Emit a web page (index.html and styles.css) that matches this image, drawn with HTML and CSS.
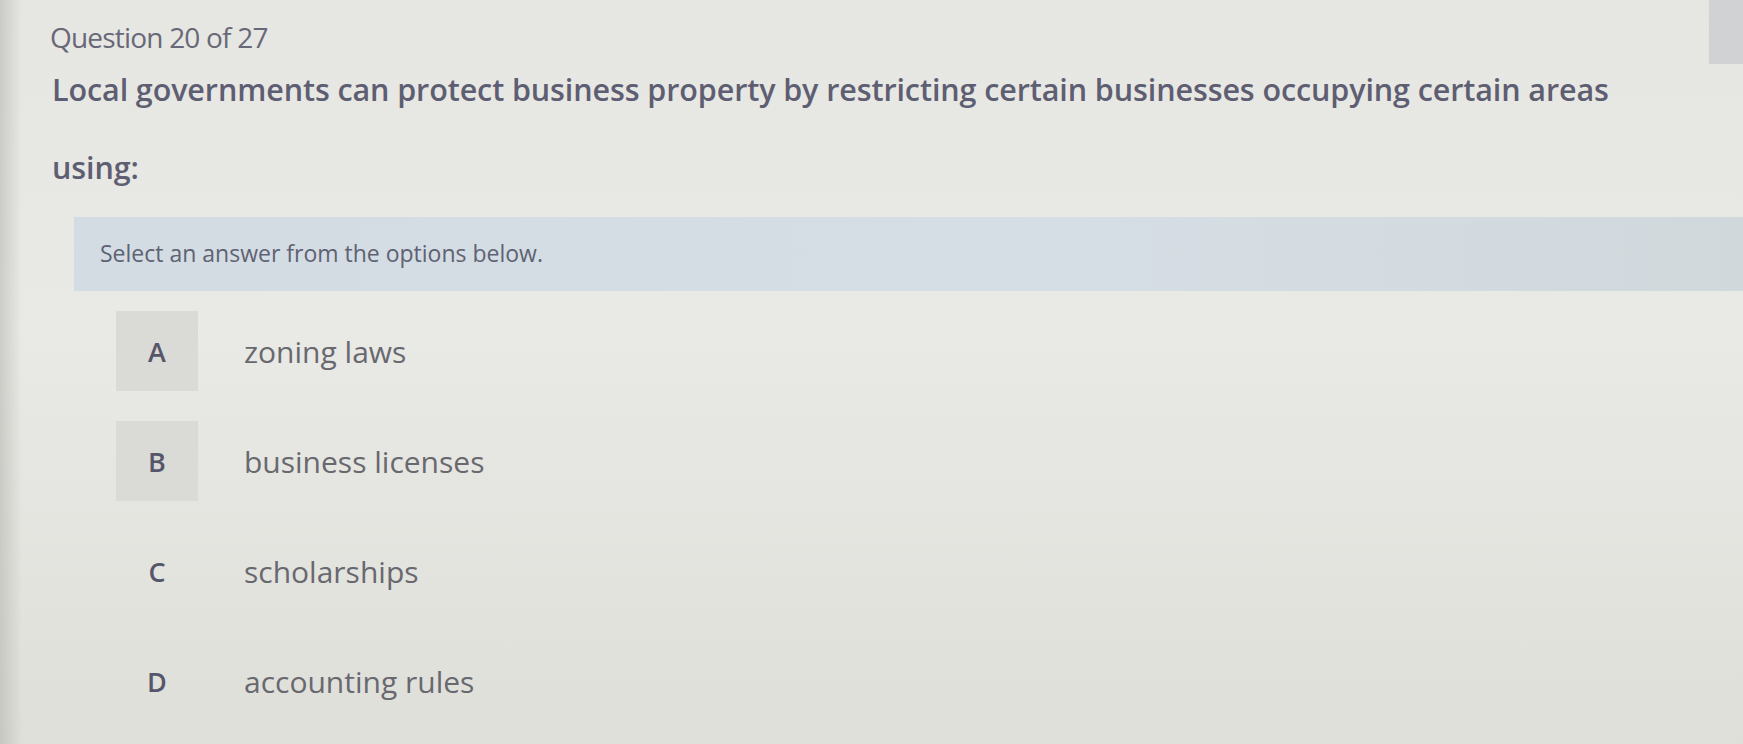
FILE: index.html
```html
<!DOCTYPE html>
<html lang="en">

<head>
    <meta charset="UTF-8">
    <meta name="viewport" content="width=device-width, initial-scale=1.0">
    <title>Question 20 of 27</title>
    <link rel="stylesheet" href="styles.css">
</head>

<body>
    <div class="quiz">
        <div class="quiz-head">
            <p class="quiz-count">Question 20 of 27</p>
            <h1 class="quiz-question">Local governments can protect business property by restricting certain businesses occupying certain areas using:</h1>
        </div>

        <div class="quiz-hint">Select an answer from the options below.</div>

        <ul class="options">
            <li class="option option-active">
                <span class="option-key">A</span>
                <span class="option-text">zoning laws</span>
            </li>
            <li class="option option-active">
                <span class="option-key">B</span>
                <span class="option-text">business licenses</span>
            </li>
            <li class="option">
                <span class="option-key">C</span>
                <span class="option-text">scholarships</span>
            </li>
            <li class="option">
                <span class="option-key">D</span>
                <span class="option-text">accounting rules</span>
            </li>
        </ul>
    </div>

    <!-- 우측 상단 스크롤 탭 -->
    <div class="scroll-tab"></div>
</body>

</html>
```

FILE: styles.css
```css
* {
    margin: 0;
    padding: 0;
    box-sizing: border-box;
}

body {
    position: relative;
    font-family: 'Open Sans', sans-serif;
    background:
        linear-gradient(90deg, rgba(170, 170, 165, 0.45) 0px, rgba(170, 170, 165, 0) 22px),
        linear-gradient(180deg, #e6e6e2 0%, #e9e9e5 45%, #dfdfda 100%);
    color: #5c5c6e;
    height: 744px;
    overflow: hidden;
}

.quiz {
    padding: 20px 0 0 50px;
}

.quiz-head {
    width: 1640px;
}

.quiz-count {
    font-size: 28px;
    letter-spacing: -0.8px;
    color: #686878;
    line-height: 34px;
}

.quiz-question {
    font-size: 30.5px;
    font-weight: 600;
    line-height: 78px;
    letter-spacing: -0.1px;
    color: #5e5e72;
    margin-top: -4px;
    padding-left: 2px;
}

.quiz-hint {
    margin-top: 11px;
    margin-left: 24px;
    padding: 21px 0 22px 26px;
    background: linear-gradient(90deg, #d3dbe3 0%, #d6dee5 60%, #d1d8dc 100%);
    font-size: 23px;
    line-height: 31px;
    color: #5e6272;
}

.options {
    list-style: none;
    display: flex;
    flex-direction: column;
    gap: 30px;
    margin: 20px 0 0 66px;
}

.option {
    display: flex;
    align-items: center;
    gap: 46px;
    height: 80px;
}

.option-key {
    width: 82px;
    height: 100%;
    display: flex;
    align-items: center;
    justify-content: center;
    font-size: 27px;
    font-weight: 600;
    color: #56566a;
}

.option-active .option-key {
    background: #dadad6;
}

.option-text {
    font-size: 30px;
    color: #68686f;
}

.scroll-tab {
    position: absolute;
    top: 0;
    right: 0;
    width: 34px;
    height: 64px;
    background: #d0d2d4;
}
```
